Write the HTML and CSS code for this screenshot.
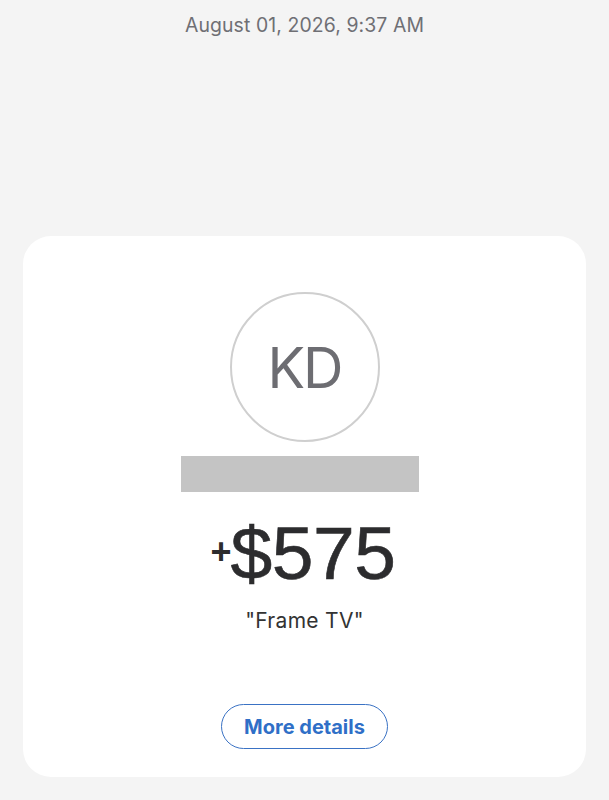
FILE: index.html
```html
<!DOCTYPE html>
<html>
<head>
<meta charset="utf-8">
<link rel="stylesheet" href="styles.css">
</head>
<body>
<div class="page">
  <div class="date">August 01, 2026, 9:37 AM</div>
  <div class="card">
    <div class="avatar">KD</div>
    <div class="redact"></div>
    <div class="amount"><span class="plus">+</span><span class="value">$575</span></div>
    <div class="memo">"Frame TV"</div>
    <button class="more">More details</button>
  </div>
</div>
</body>
</html>
```
FILE: styles.css
```css
html, body {
  margin: 0;
  padding: 0;
  background: #f4f4f4;
  font-family: "Inter", "Liberation Sans", sans-serif;
}
.page {
  width: 609px;
  height: 800px;
  display: flex;
  flex-direction: column;
  align-items: center;
}
.date {
  margin-top: 13px;
  font-size: 19.4px;
  letter-spacing: 0.1px;
  color: #6f6f74;
  line-height: 24px;
}
.card {
  margin-top: 199px;
  width: 563px;
  height: 541px;
  background: #fff;
  border-radius: 28px;
  display: flex;
  flex-direction: column;
  align-items: center;
  box-sizing: border-box;
  padding-top: 56px;
}
.avatar {
  width: 150px;
  height: 150px;
  box-sizing: border-box;
  border: 2px solid #cfcfcf;
  border-radius: 50%;
  display: flex;
  align-items: center;
  justify-content: center;
  font-size: 56px;
  color: #6d6d72;
  letter-spacing: -2px;
  padding-top: 2px;
}
.redact {
  margin-top: 14px;
  margin-right: 9px;
  width: 238px;
  height: 36px;
  background: #c4c4c4;
}
.amount {
  margin-top: 22px;
  height: 75px;
  color: #2c2c2e;
  font-family: "Liberation Sans", "Arial", sans-serif;
  line-height: 75px;
  white-space: nowrap;
}
.plus {
  font-size: 36px;
  font-weight: 700;
  vertical-align: 15px;
  margin-right: -1px;
  margin-left: -3px;
}
.value {
  font-size: 75px;
  letter-spacing: -0.5px;
  -webkit-text-stroke: 0.6px #2c2c2e;
}
.memo {
  margin-top: 20px;
  font-size: 21px;
  letter-spacing: 0.3px;
  line-height: 24px;
  color: #333;
}
.more {
  margin-top: 71px;
  width: 167px;
  height: 45px;
  border: 1.5px solid #3a72c4;
  border-radius: 23px;
  background: #fff;
  color: #2f6fc7;
  font-family: "Inter", "Liberation Sans", sans-serif;
  font-weight: 700;
  font-size: 20px;
  padding: 0;
}
```
